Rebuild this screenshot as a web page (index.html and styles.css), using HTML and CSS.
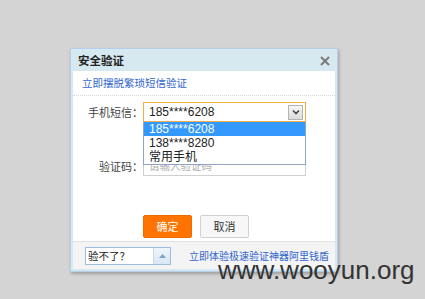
FILE: index.html
```html
<!DOCTYPE html>
<html>
<head>
<meta charset="utf-8">
<link rel="stylesheet" href="styles.css">
</head>
<body>
<div class="dialog">
  <div class="titlebar">
    <span class="title">安全验证</span>
    <span class="close">
      <svg width="10" height="10" viewBox="0 0 10 10"><path d="M1 1L9 9M9 1L1 9" stroke="#7a7a7a" stroke-width="2"/></svg>
    </span>
  </div>
  <div class="body">
    <div class="linkrow"><a class="link">立即摆脱繁琐短信验证</a></div>
    <div class="form">
      <div class="row">
        <span class="label">手机短信：</span>
        <div class="select">
          <span class="val">185****6208</span>
          <span class="arrow">
            <svg width="8" height="6" viewBox="0 0 8 6"><path d="M1 1.5L4 4.5L7 1.5" fill="none" stroke="#444" stroke-width="1.6"/></svg>
          </span>
          <ul class="menu">
            <li class="sel">185****6208</li>
            <li>138****8280</li>
            <li>常用手机</li>
          </ul>
        </div>
      </div>
      <div class="row row2">
        <span class="label">验证码：</span>
        <div class="input">请输入验证码</div>
      </div>
      <div class="buttons">
        <span class="btn ok">确定</span>
        <span class="btn cancel">取消</span>
      </div>
    </div>
    <div class="footer">
      <div class="fselect">
        <span class="fval">验不了？</span>
        <span class="farrow"><svg width="7" height="4" viewBox="0 0 7 4"><path d="M0 4L3.5 0L7 4Z" fill="#7fa3c8"/></svg></span>
      </div>
      <a class="flink">立即体验极速验证神器阿里钱盾</a>
    </div>
  </div>
</div>
<div class="watermark">www.wooyun.org</div>
</body>
</html>
```
FILE: styles.css
```css
html, body {
  margin: 0;
  padding: 0;
}
body {
  background: #d4d4d4;
  width: 425px;
  height: 299px;
  overflow: hidden;
  position: relative;
  font-family: "Liberation Sans", "Noto Sans CJK SC", sans-serif;
  font-size: 11px;
  color: #333;
}
.dialog {
  position: absolute;
  left: 70px;
  top: 48px;
  width: 262px;
  border: 1px solid #b5cfe8;
  background: #d6e8f0;
  padding: 0 2px 2px;
  box-shadow: 1px 2px 3px rgba(0,0,0,0.25);
}
.titlebar {
  height: 22px;
  display: flex;
  align-items: center;
  justify-content: space-between;
  padding: 0 5px 0 5px;
}
.title {
  font-weight: bold;
  font-size: 11.5px;
  color: #222;
  font-family: "Noto Sans CJK SC", sans-serif;
}
.close {
  display: flex;
  margin-top: 2px;
}
.body {
  background: #fff;
}
.linkrow {
  height: 24px;
  line-height: 24px;
  padding-left: 9px;
  border-bottom: 1px dotted #d8d8d8;
}
.link, .flink {
  color: #3366cc;
  font-family: "Noto Sans CJK SC", sans-serif;
  font-size: 10.5px;
}
.form {
  padding-top: 6px;
  padding-bottom: 3px;
}
.row {
  display: flex;
  align-items: center;
  height: 20px;
}
.row2 {
  margin-top: 34px;
}
.label {
  width: 70px;
  text-align: right;
  font-family: "Noto Sans CJK SC", sans-serif;
  font-size: 11px;
  color: #444;
}
.select {
  position: relative;
  width: 156px;
  height: 18px;
  border: 1px solid #f0b048;
  display: flex;
  align-items: center;
  justify-content: space-between;
  padding-left: 5px;
  box-sizing: content-box;
}
.val {
  font-size: 12px;
  color: #222;
}
.arrow {
  width: 13px;
  height: 13px;
  margin-right: 2px;
  border: 1px solid #b4b4b4;
  background: linear-gradient(#f6f6f6, #dcdcdc);
  display: flex;
  align-items: center;
  justify-content: center;
}
.menu {
  position: absolute;
  left: -1px;
  top: 19px;
  width: 161px;
  margin: 0;
  padding: 0;
  list-style: none;
  border: 1px solid #8ea6c4;
  border-top: none;
  background: #fff;
  z-index: 5;
}
.menu li {
  height: 14px;
  line-height: 14px;
  padding-left: 5px;
  font-size: 12px;
  color: #222;
  font-family: "Liberation Sans", "Noto Sans CJK SC", sans-serif;
}
.menu li.sel {
  background: #3399ff;
  color: #fff;
}
.input {
  width: 156px;
  height: 18px;
  line-height: 18px;
  border: 1px solid #cfcfcf;
  padding-left: 5px;
  color: #b0b0b0;
  font-family: "Noto Sans CJK SC", sans-serif;
  font-size: 10.5px;
}
.buttons {
  display: flex;
  gap: 8px;
  margin-top: 39px;
  padding-left: 70px;
}
.btn {
  width: 47px;
  height: 21px;
  line-height: 21px;
  text-align: center;
  border-radius: 2px;
  font-family: "Noto Sans CJK SC", sans-serif;
  font-size: 11px;
}
.ok {
  background: #ff7300;
  border: 1px solid #f06a00;
  color: #fff;
}
.cancel {
  background: #f7f7f7;
  border: 1px solid #d0d0d0;
  color: #333;
}
.footer {
  background: #f4f4f4;
  border-top: 1px solid #e2e2e2;
  height: 27px;
  display: flex;
  align-items: center;
  justify-content: space-between;
  padding: 0 6px 0 12px;
}
.fselect {
  width: 84px;
  height: 16px;
  border: 1px solid #9bbcdc;
  background: #fff;
  display: flex;
  align-items: center;
  justify-content: space-between;
}
.fval {
  padding-left: 2px;
  font-family: "Noto Sans CJK SC", sans-serif;
  font-size: 10.5px;
  color: #222;
}
.farrow {
  width: 16px;
  height: 16px;
  border-left: 1px solid #c5d7ea;
  background: linear-gradient(#eef4fa, #d9e6f3);
  display: flex;
  align-items: center;
  justify-content: center;
}
.flink {
  font-size: 10px;
}
.watermark {
  position: absolute;
  left: 218px;
  top: 255px;
  font-family: "Liberation Sans", sans-serif;
  font-size: 26px;
  color: #333;
}
```
